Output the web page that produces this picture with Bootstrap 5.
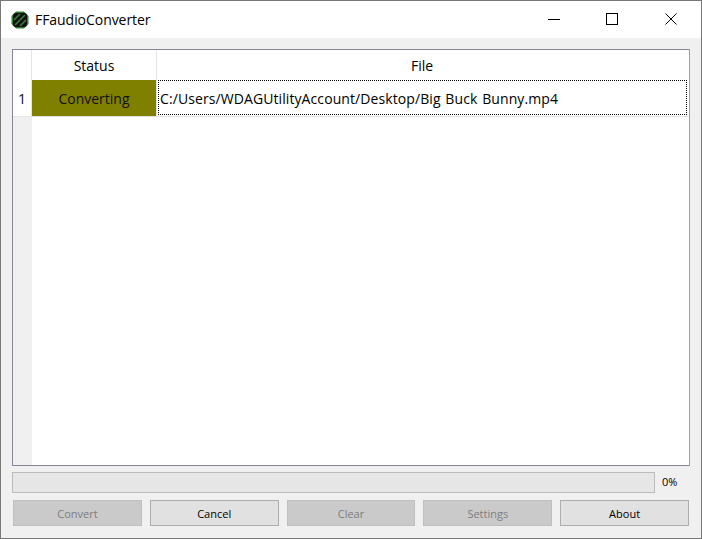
<!doctype html>
<html><head><meta charset="utf-8">
<link href="https://cdn.jsdelivr.net/npm/bootstrap@5.3.0/dist/css/bootstrap.min.css" rel="stylesheet">
<style>
html,body{margin:0;height:539px;overflow:hidden;background:#f0f0f0}
body{font-family:"Open Sans","Noto Sans",sans-serif;color:#000}
.win{width:702px;height:539px;border:1px solid #787878;background:#f0f0f0}
.tbar{height:37px;background:#fff;flex:none}
.ttl{font-size:14px;margin-left:6px;letter-spacing:-.05px}
.ico{margin-left:10px}
.wbtn{width:46px;height:37px;margin-left:12px;padding-bottom:1px}
.wbtn:last-child{margin-left:13px;margin-right:7px}
.body-area{padding:11px 11px 12px 11px;flex:1;min-height:0}
.tablebox{flex:1;min-height:0;border:1px solid #85859a;background:#fff;border-right-color:#a0a0a0}
.corner{background:#fff;border-right:1px solid #e4e4e4;width:19px;flex:none}
.hd{height:30px;flex:none;font-size:14px}
.h1c{width:125px;border-right:1px solid #e4e4e4}
.hfile{padding-right:2px}
.r1{height:37px;flex:none;font-size:14px;border-bottom:1px solid #e4e4e4}
.rn{width:19px;background:#fff;border-right:1px solid #e4e4e4;font-size:15px;color:#1a1a2a}
.stat{width:124px;background:#808000;color:#111}
.stat-gap{width:1px;background:#e4e4e4}
.fname{flex:1;margin:0 2px 1px 1px;border:1px dotted #000;padding:1px 0 0 1px;white-space:pre;letter-spacing:.09px;word-spacing:1px}
.rest{flex:1;min-height:0}
.rest-l{width:19px;background:#f0f0f0}
.pgrow{margin-top:6px;height:21px}
.pg{width:643px;height:21px;background:#e6e6e6;border:1px solid #bcbcbc}
.pct{font-size:11px;margin-left:7px}
.btnrow{margin-top:7px;margin-left:1px;margin-right:1px;gap:8px}
.wb{height:26px;width:129px;border:1px solid #adadad;background:#e1e1e1;font-size:11px;color:#000;padding:0;border-radius:0;line-height:1}
.wb:disabled{background:#cacaca;color:#7d7d7d;opacity:1;border-color:#bfbfbf}
</style></head><body>
<div class="win d-flex flex-column">
 <div class="tbar d-flex align-items-center">
  <svg class="ico" width="18" height="18" viewBox="0 0 18 18"><path d="M5 0.5H13L17.5 5V13L13 17.5H5L0.5 13V5Z" fill="#2f7d2f"/><rect x="2" y="2" width="14" height="14" rx="3" fill="#111"/><path d="M3 9 9 3M4 14 14 4M9 15 15 9" stroke="#3c7a3c" stroke-width="1.7"/></svg>
  <span class="ttl">FFaudioConverter</span>
  <div class="ms-auto d-flex">
   <div class="wbtn d-flex align-items-center justify-content-center"><svg width="12" height="12" viewBox="0 0 12 12"><path d="M0 6.5H12" stroke="#000"/></svg></div>
   <div class="wbtn d-flex align-items-center justify-content-center"><svg width="12" height="12" viewBox="0 0 12 12"><rect x=".5" y=".5" width="11" height="11" fill="none" stroke="#000"/></svg></div>
   <div class="wbtn d-flex align-items-center justify-content-center"><svg width="12" height="12" viewBox="0 0 12 12"><path d="M.5.5 11.5 11.5M11.5.5.5 11.5" stroke="#000"/></svg></div>
  </div>
 </div>
 <div class="body-area d-flex flex-column">
  <div class="tablebox d-flex flex-column">
   <div class="hd d-flex">
    <div class="corner"></div>
    <div class="h1c d-flex align-items-center justify-content-center">Status</div>
    <div class="hfile flex-fill d-flex align-items-center justify-content-center">File</div>
   </div>
   <div class="r1 d-flex">
    <div class="rn d-flex align-items-center justify-content-center">1</div>
    <div class="stat d-flex align-items-center justify-content-center">Converting</div>
    <div class="stat-gap"></div>
    <div class="fname d-flex align-items-center">C:/Users/WDAGUtilityAccount/Desktop/Big Buck Bunny.mp4</div>
   </div>
   <div class="rest d-flex"><div class="rest-l"></div></div>
  </div>
  <div class="pgrow d-flex align-items-center">
   <div class="pg"></div><span class="pct">0%</span>
  </div>
  <div class="btnrow d-flex">
   <button class="btn wb" disabled>Convert</button>
   <button class="btn wb">Cancel</button>
   <button class="btn wb" disabled>Clear</button>
   <button class="btn wb" disabled>Settings</button>
   <button class="btn wb">About</button>
  </div>
 </div>
</div>
</body></html>
